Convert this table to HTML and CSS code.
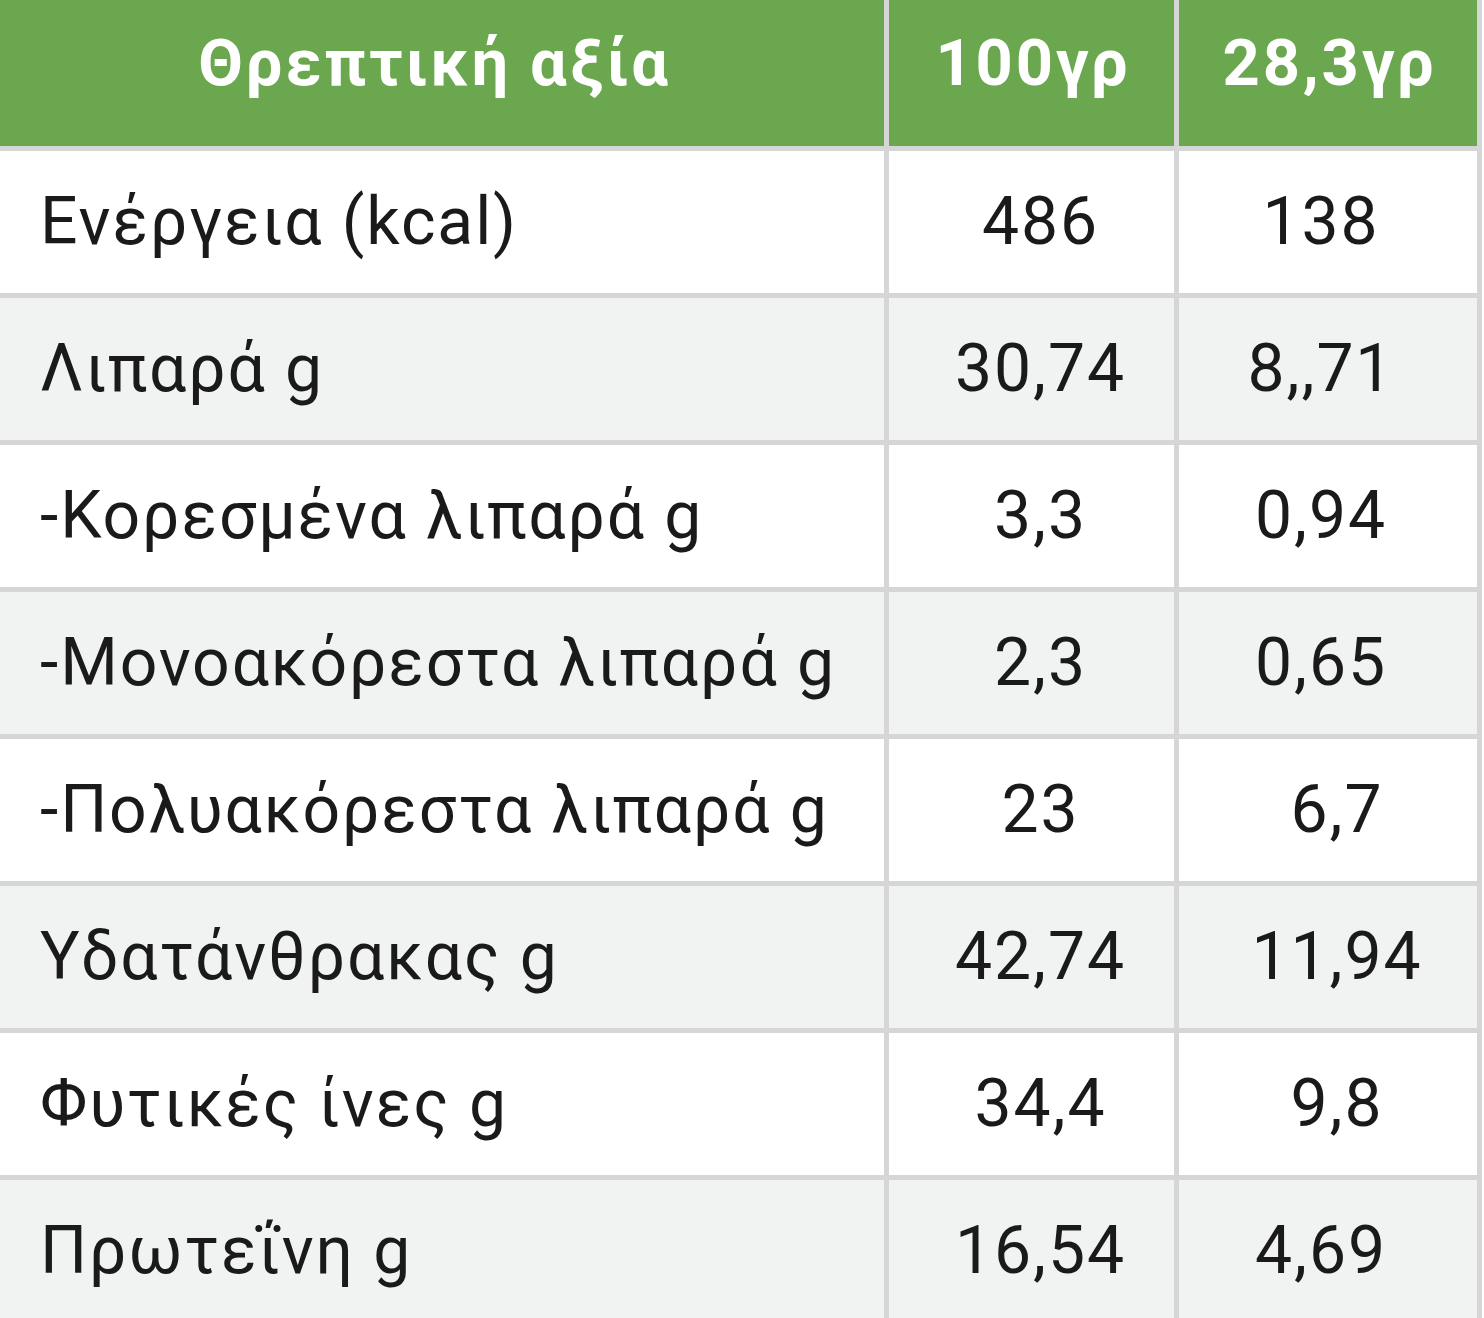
FILE: index.html
```html
<!DOCTYPE html>
<html lang="el">
<head>
<meta charset="utf-8">
<title>Θρεπτική αξία</title>
<link rel="stylesheet" href="styles.css">
</head>
<body>
<table class="nutrition">
  <colgroup>
    <col class="col-name">
    <col class="col-100">
    <col class="col-serving">
  </colgroup>
  <thead>
    <tr>
      <th class="name">Θρεπτική αξία</th>
      <th>100γρ</th>
      <th>28,3γρ</th>
    </tr>
  </thead>
  <tbody>
    <tr><td class="name">Ενέργεια (kcal)</td><td class="v">486</td><td class="s">138</td></tr>
    <tr><td class="name">Λιπαρά g</td><td class="v">30,74</td><td class="s">8,,71</td></tr>
    <tr><td class="name">-Κορεσμένα λιπαρά g</td><td class="v">3,3</td><td class="s">0,94</td></tr>
    <tr><td class="name">-Μονοακόρεστα λιπαρά g</td><td class="v">2,3</td><td class="s">0,65</td></tr>
    <tr><td class="name">-Πολυακόρεστα λιπαρά g</td><td class="v">23</td><td class="s shift">6,7</td></tr>
    <tr><td class="name">Υδατάνθρακας g</td><td class="v">42,74</td><td class="s shift">11,94</td></tr>
    <tr><td class="name">Φυτικές ίνες g</td><td class="v">34,4</td><td class="s shift">9,8</td></tr>
    <tr><td class="name">Πρωτεΐνη g</td><td class="v">16,54</td><td class="s">4,69</td></tr>
  </tbody>
</table>
</body>
</html>
```
FILE: styles.css
```css
html, body {
  margin: 0;
  padding: 0;
  background: #ffffff;
}

body {
  font-family: Roboto, "Noto Sans", "Liberation Sans", sans-serif;
  color: #1a1a1a;
  overflow: hidden;
}

.nutrition {
  table-layout: fixed;
  width: 1505px;
  margin: -24px 0 0 -23px;
  border-collapse: separate;
  border-spacing: 5px;
  background: #d6d6d6;
}

.col-name { width: 902px; }
.col-100 { width: 285px; }
.col-serving { width: 298px; }

.nutrition th,
.nutrition td {
  padding: 0;
  white-space: nowrap;
  line-height: 1;
}

.nutrition th {
  height: 165px;
  background: #6aa74f;
  color: #ffffff;
  font-weight: 700;
  font-size: 65px;
  letter-spacing: 2.8px;
  text-align: center;
  vertical-align: middle;
  padding-left: 3px;
}

.nutrition td {
  height: 142px;
  font-size: 66px;
  letter-spacing: 1.9px;
  vertical-align: middle;
  background: #ffffff;
}

.nutrition tbody tr:nth-child(even) td {
  background: #f1f2f2;
}

.nutrition td.name {
  text-align: left;
  padding-left: 58px;
}

.nutrition td.v {
  text-align: center;
  padding-left: 18px;
}

.nutrition td.s {
  text-align: center;
  padding-right: 14px;
}

.nutrition td.s.shift {
  padding-right: 0;
  padding-left: 18px;
}
```
